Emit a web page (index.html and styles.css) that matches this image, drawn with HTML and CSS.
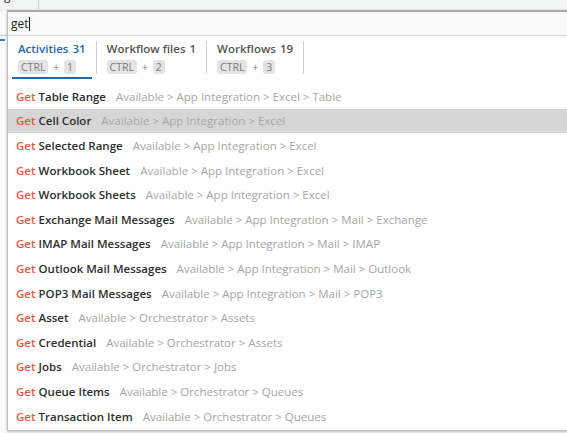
FILE: index.html
```html
<!DOCTYPE html>
<html>
<head>
<meta charset="utf-8">
<link rel="stylesheet" href="styles.css">
</head>
<body>
<div class="page">
  <div class="topbar"><span class="topchar">g</span><span class="topsep"></span></div>
  <div class="under">
    <div class="under-line"></div>
    <div class="under-blue"></div>
  </div>
  <div class="popup">
    <div class="search"><span class="query">get</span><span class="caret"></span></div>
    <div class="tabs">
      <div class="tab active">
        <div class="tab-title">Activities <span class="num">31</span></div>
        <div class="keys"><span class="key">CTRL</span><span class="plus">+</span><span class="key">1</span></div>
      </div>
      <div class="tab-sep"></div>
      <div class="tab">
        <div class="tab-title">Workflow files <span class="num">1</span></div>
        <div class="keys"><span class="key">CTRL</span><span class="plus">+</span><span class="key">2</span></div>
      </div>
      <div class="tab-sep"></div>
      <div class="tab">
        <div class="tab-title">Workflows <span class="num">19</span></div>
        <div class="keys"><span class="key">CTRL</span><span class="plus">+</span><span class="key">3</span></div>
      </div>
      <div class="tab-sep"></div>
    </div>
    <ul class="results">
      <li><span class="hl">Get</span> <b>Table Range</b><span class="path">Available &gt; App Integration &gt; Excel &gt; Table</span></li>
      <li class="selected"><span class="hl">Get</span> <b>Cell Color</b><span class="path">Available &gt; App Integration &gt; Excel</span></li>
      <li><span class="hl">Get</span> <b>Selected Range</b><span class="path">Available &gt; App Integration &gt; Excel</span></li>
      <li><span class="hl">Get</span> <b>Workbook Sheet</b><span class="path">Available &gt; App Integration &gt; Excel</span></li>
      <li><span class="hl">Get</span> <b>Workbook Sheets</b><span class="path">Available &gt; App Integration &gt; Excel</span></li>
      <li><span class="hl">Get</span> <b>Exchange Mail Messages</b><span class="path">Available &gt; App Integration &gt; Mail &gt; Exchange</span></li>
      <li><span class="hl">Get</span> <b>IMAP Mail Messages</b><span class="path">Available &gt; App Integration &gt; Mail &gt; IMAP</span></li>
      <li><span class="hl">Get</span> <b>Outlook Mail Messages</b><span class="path">Available &gt; App Integration &gt; Mail &gt; Outlook</span></li>
      <li><span class="hl">Get</span> <b>POP3 Mail Messages</b><span class="path">Available &gt; App Integration &gt; Mail &gt; POP3</span></li>
      <li><span class="hl">Get</span> <b>Asset</b><span class="path">Available &gt; Orchestrator &gt; Assets</span></li>
      <li><span class="hl">Get</span> <b>Credential</b><span class="path">Available &gt; Orchestrator &gt; Assets</span></li>
      <li><span class="hl">Get</span> <b>Jobs</b><span class="path">Available &gt; Orchestrator &gt; Jobs</span></li>
      <li><span class="hl">Get</span> <b>Queue Items</b><span class="path">Available &gt; Orchestrator &gt; Queues</span></li>
      <li><span class="hl">Get</span> <b>Transaction Item</b><span class="path">Available &gt; Orchestrator &gt; Queues</span></li>
    </ul>
  </div>
</div>
</body>
</html>
```
FILE: styles.css
```css
* { box-sizing: border-box; }
html, body { margin: 0; padding: 0; }
body {
  width: 567px;
  height: 433px;
  overflow: hidden;
  background: #fbfbfb;
  font-family: "Open Sans", "Noto Sans", sans-serif;
}
.page { position: relative; width: 567px; height: 433px; }
.topbar {
  height: 11px;
  background: #f2f3f3;
  display: flex;
  align-items: flex-start;
  overflow: hidden;
}
.topchar { font-size: 12px; color: #333; margin-left: 4px; line-height: 12px; margin-top: -10px; }
.topsep { width: 1px; height: 9px; background: #c8c8c8; margin-left: 27px; }
.under { position: relative; }
.under-line { height: 1px; background: #d0d0d0; margin-top: 24px; width: 8px; }
.under-blue { height: 2px; background: #3d7cc0; width: 5px; margin-top: 3px; }

.popup {
  position: absolute;
  left: 7px;
  top: 10px;
  width: 600px;
  height: 421px;
  background: #fff;
  border: 1px solid #bdbdbd;
  border-top: 2px solid #a9a9a9;
  box-shadow: 0 1px 3px rgba(0,0,0,0.25);
  overflow: hidden;
}
.search {
  height: 24px;
  background: #f9f9f9;
  border-bottom: 1px solid #dcdcdc;
  display: flex;
  align-items: center;
  padding-left: 3px;
}
.query { font-size: 12px; color: #222; }
.caret { width: 1px; height: 14px; background: #222; }

.tabs {
  display: flex;
  align-items: flex-start;
  padding: 5px 0 0 4px;
  height: 44px;
}
.tab {
  padding: 0 6px 0 6px;
  height: 38px;
}
.tab-sep {
  width: 1px;
  height: 33px;
  margin: 0 4px;
  background: #cfcfcf;
}
.tab-title {
  font-size: 11.5px;
  font-weight: 600;
  color: #555;
  line-height: 16px;
  white-space: nowrap;
}
.tab-title .num { margin-left: 1px; }
.tab.active .tab-title { color: #1f67b0; }
.tab.active { border-bottom: 2px solid #1f67b0; }
.keys { display: flex; align-items: center; margin-top: 3px; gap: 5px; }
.key {
  background: #e3e3e3;
  color: #7a7a7a;
  font-size: 10.5px;
  line-height: 14px;
  padding: 0 3px;
  border-radius: 3px;
}
.plus { font-size: 10px; color: #777; }

.results { list-style: none; margin: 0; padding: 4px 0 0 0; }
.results li {
  height: 24.6px;
  display: flex;
  align-items: center;
  padding-left: 8px;
  font-size: 11.5px;
  white-space: nowrap;
}
.results li.selected { background: #d6d6d6; }
.hl { color: #e35a44; font-weight: 600; margin-right: 3px; }
.results b { font-weight: 600; color: #2e2e2e; }
.path { color: #a6a6a6; margin-left: 10px; }
```
